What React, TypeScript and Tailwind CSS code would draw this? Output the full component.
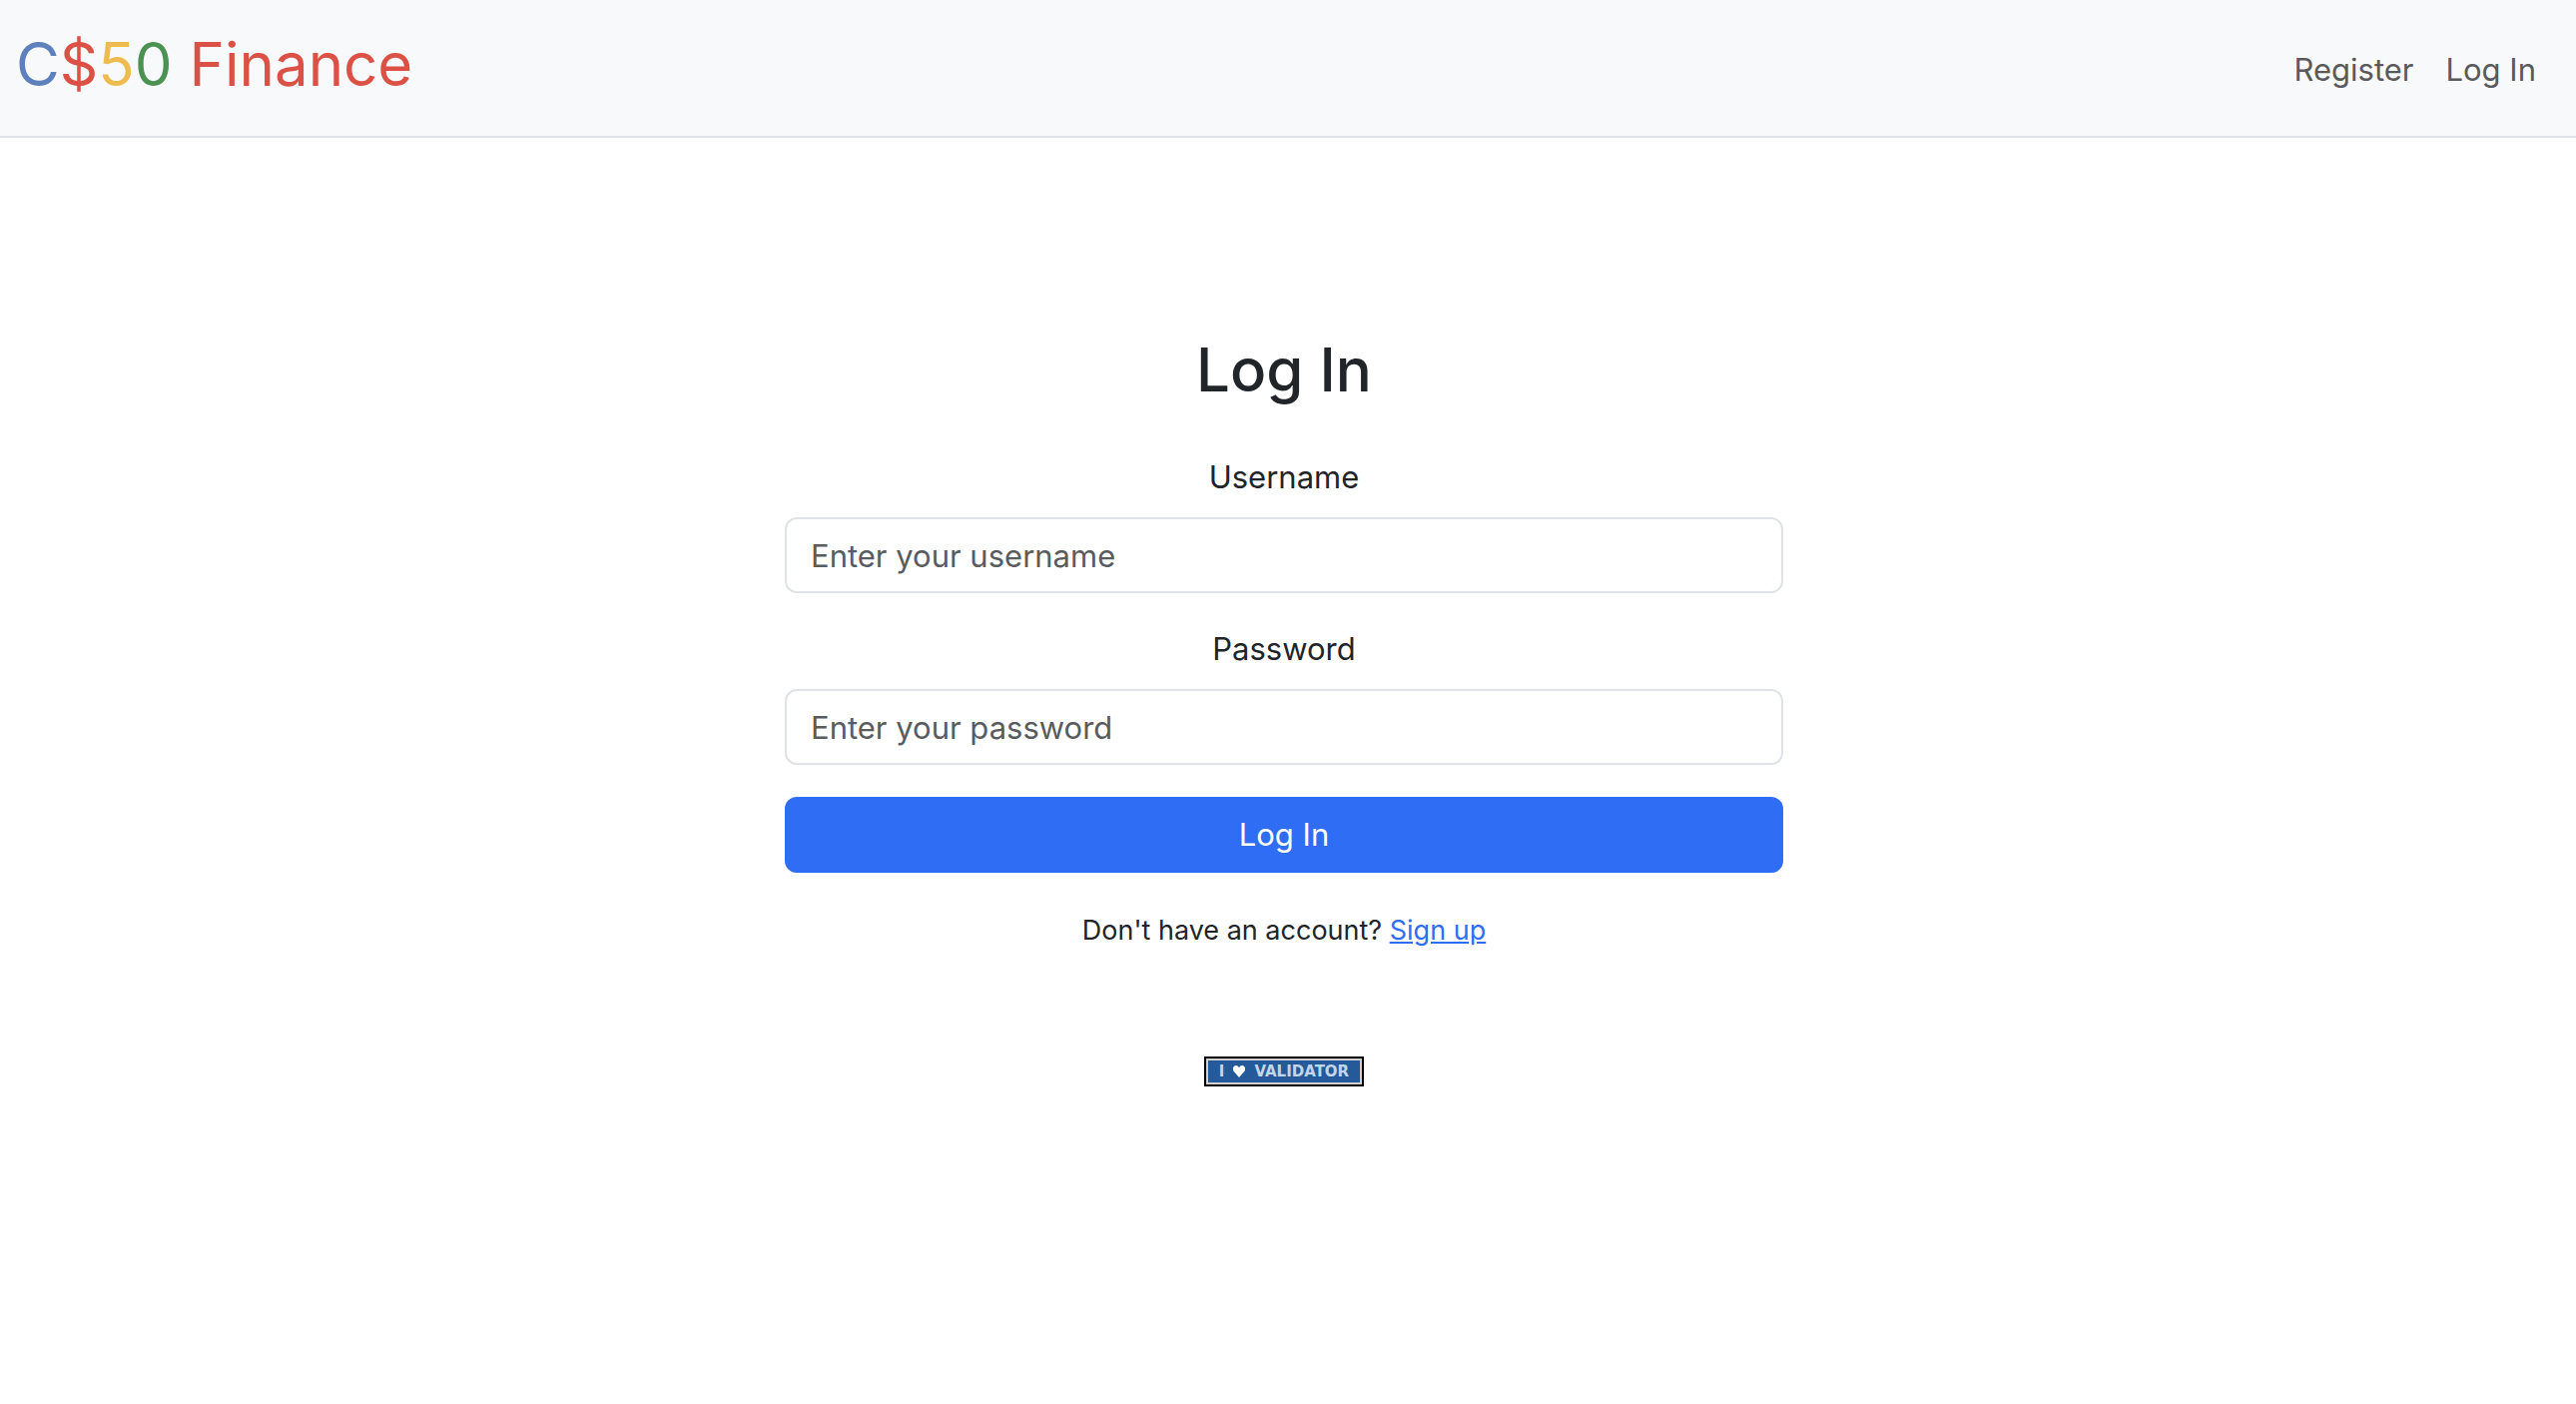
import { useState } from "react";

interface FieldProps {
  id: string;
  label: string;
  type: string;
  placeholder: string;
  value: string;
  onChange: (value: string) => void;
}

function Brand() {
  return (
    <a href="/" className="text-[60px] leading-24 whitespace-nowrap">
      <span className="text-[#5e80bc]">C</span>
      <span className="text-[#dc5145]">$</span>
      <span className="text-[#eebb4f]">5</span>
      <span className="text-[#4c9353]">0</span>
      <span className="text-[#dc5145]"> Finance</span>
    </a>
  );
}

function Navbar() {
  return (
    <nav className="flex items-start justify-between border-b-2 border-[#dfe2e6] bg-[#f8f9fb] px-4 pt-4 pb-6">
      <Brand />
      <ul className="mt-[30px] mr-6 flex gap-8 text-[31px] leading-12 text-[#5a5a5b]">
        <li>
          <a href="/register">Register</a>
        </li>
        <li>
          <a href="/login">Log In</a>
        </li>
      </ul>
    </nav>
  );
}

function Field({ id, label, type, placeholder, value, onChange }: FieldProps) {
  return (
    <div className="mb-8">
      <label htmlFor={id} className="mb-4 block text-[31px] leading-12">
        {label}
      </label>
      <input
        id={id}
        name={id}
        type={type}
        autoComplete="off"
        placeholder={placeholder}
        value={value}
        onChange={(e) => onChange(e.target.value)}
        className="block h-19 w-full rounded-xl border-2 border-[#dfe2e6] bg-white px-6 text-[31px] placeholder:text-[#595c5f] focus:border-[#86b7fe] focus:outline-none"
      />
    </div>
  );
}

function ValidatorBadge() {
  return (
    <button
      type="button"
      className="flex h-[30px] w-40 border-2 border-black bg-[#24599a] font-['DejaVu_Sans'] text-[15px] font-bold text-[#c3d6e9]"
    >
      <span className="flex h-full w-full items-center justify-center gap-2 border-2 border-[#d0d0d0]">
        <span>I</span>
        <svg viewBox="0 0 14 14" className="h-3.5 w-3.5" fill="#ffffff" aria-hidden="true">
          <path d="M3 1h2l2 2 2-2h2l2 2v3L7 13 1 6V3z" />
        </svg>
        <span>VALIDATOR</span>
      </span>
    </button>
  );
}

export default function App() {
  const [username, setUsername] = useState("");
  const [password, setPassword] = useState("");

  return (
    <div className="min-h-screen bg-white font-['Inter','Liberation_Sans',sans-serif] text-[#212529]">
      <Navbar />

      <main className="flex flex-col items-center pt-48 pr-2 text-center">
        <form className="w-full max-w-[1000px]" onSubmit={(e) => e.preventDefault()}>
          <h1 className="mb-11 text-[60px] leading-20 font-medium">Log In</h1>
          <Field
            id="username"
            label="Username"
            type="text"
            placeholder="Enter your username"
            value={username}
            onChange={setUsername}
          />
          <Field
            id="password"
            label="Password"
            type="password"
            placeholder="Enter your password"
            value={password}
            onChange={setPassword}
          />
          <button type="submit" className="h-19 w-full rounded-xl bg-[#306df5] text-[31px] text-white">
            Log In
          </button>
        </form>

        <p className="mt-9 text-[27px] leading-11">
          Don't have an account?{" "}
          <a href="/register" className="text-[#306df5] underline">
            Sign up
          </a>
        </p>

        <footer className="mt-26">
          <ValidatorBadge />
        </footer>
      </main>
    </div>
  );
}
